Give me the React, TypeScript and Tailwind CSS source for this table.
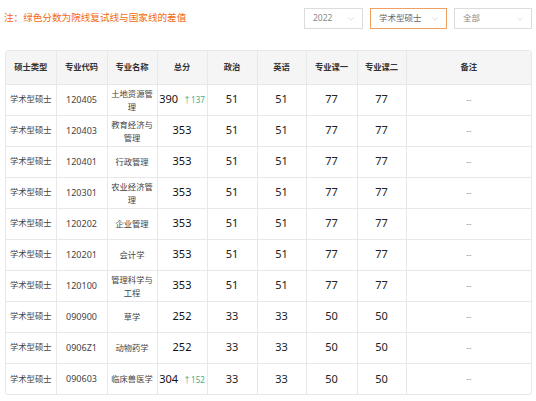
import { ChevronDown } from 'lucide-react';

type Row = {
    code: string;
    name: string;
    total: number;
    diff?: number;
    politics: number;
    english: number;
    course1: number;
    course2: number;
};

const rows: Row[] = [
    { code: '120405', name: '土地资源管理', total: 390, diff: 137, politics: 51, english: 51, course1: 77, course2: 77 },
    { code: '120403', name: '教育经济与管理', total: 353, politics: 51, english: 51, course1: 77, course2: 77 },
    { code: '120401', name: '行政管理', total: 353, politics: 51, english: 51, course1: 77, course2: 77 },
    { code: '120301', name: '农业经济管理', total: 353, politics: 51, english: 51, course1: 77, course2: 77 },
    { code: '120202', name: '企业管理', total: 353, politics: 51, english: 51, course1: 77, course2: 77 },
    { code: '120201', name: '会计学', total: 353, politics: 51, english: 51, course1: 77, course2: 77 },
    { code: '120100', name: '管理科学与工程', total: 353, politics: 51, english: 51, course1: 77, course2: 77 },
    { code: '090900', name: '草学', total: 252, politics: 33, english: 33, course1: 50, course2: 50 },
    { code: '0906Z1', name: '动物药学', total: 252, politics: 33, english: 33, course1: 50, course2: 50 },
    { code: '090603', name: '临床兽医学', total: 304, diff: 152, politics: 33, english: 33, course1: 50, course2: 50 },
];

const headers = ['硕士类型', '专业代码', '专业名称', '总分', '政治', '英语', '专业课一', '专业课二', '备注'];
const widths = ['w-[50px]', 'w-[51px]', 'w-[50px]', 'w-[50px]', 'w-[50px]', 'w-[49px]', 'w-[51px]', 'w-[49px]', 'w-auto'];

function FakeSelect({ label, width, active }: { label: string; width: string; active?: boolean }) {
    return (
        <div
            className={`flex h-[21px] ${width} items-center justify-between border bg-white pl-[8px] pr-[6px] text-[8.5px] ${
                active ? 'border-[#f0a060] text-[#666]' : 'border-[#dcdcdc] text-[#888]'
            }`}
        >
            <span>{label}</span>
            <ChevronDown className="h-[10px] w-[10px] text-[#c8c8c8]" strokeWidth={1.5} />
        </div>
    );
}

export default function App() {
    return (
        <div
            className="h-[401px] w-[536px] bg-white text-[#333]"
            style={{ fontFamily: '"Noto Sans", "Noto Sans CJK SC", sans-serif' }}
        >
            {/* Filter bar */}
            <div className="flex h-[36px] items-center justify-between pl-[4px] pr-[4px] pt-[1px]">
                <p className="text-[9.6px] text-[#f26a12]">注：绿色分数为院线复试线与国家线的差值</p>
                <div className="flex items-center gap-[7px]">
                    <FakeSelect label="2022" width="w-[59px]" />
                    <FakeSelect label="学术型硕士" width="w-[77px]" active />
                    <FakeSelect label="全部" width="w-[78px]" />
                </div>
            </div>

            {/* Score table */}
            <div className="mx-[5px] mt-[14px] w-[527px] overflow-hidden rounded-[3px] border border-[#e8e8e8]">
                <table className="w-full table-fixed border-collapse text-center">
                    <thead>
                        <tr className="h-[33px] bg-[#f5f5f5]">
                            {headers.map((h, i) => (
                                <th
                                    key={h}
                                    className={`${widths[i]} border-l border-[#e8e8e8] text-[8.3px] font-bold text-[#333] first:border-l-0`}
                                >
                                    {h}
                                </th>
                            ))}
                        </tr>
                    </thead>
                    <tbody>
                        {rows.map((r) => (
                            <tr key={r.code} className="h-[31px] border-t border-[#e8e8e8] text-[11px] text-[#222]">
                                <td className="text-[8.3px] text-[#444]">学术型硕士</td>
                                <td className="border-l border-[#e8e8e8] text-[9px] text-[#444]">{r.code}</td>
                                <td className="border-l border-[#e8e8e8] px-[3px] text-[8.3px] leading-[13px] text-[#444]">
                                    {r.name}
                                </td>
                                <td className="border-l border-[#e8e8e8] whitespace-nowrap text-[#111]">
                                    {r.total}
                                    {r.diff && (
                                        <span className="ml-[5px] text-[8px] text-[#4aaa86]">↑{r.diff}</span>
                                    )}
                                </td>
                                <td className="border-l border-[#e8e8e8]">{r.politics}</td>
                                <td className="border-l border-[#e8e8e8]">{r.english}</td>
                                <td className="border-l border-[#e8e8e8]">{r.course1}</td>
                                <td className="border-l border-[#e8e8e8]">{r.course2}</td>
                                <td className="border-l border-[#e8e8e8] text-[8px] text-[#999]">--</td>
                            </tr>
                        ))}
                    </tbody>
                </table>
            </div>
        </div>
    );
}
